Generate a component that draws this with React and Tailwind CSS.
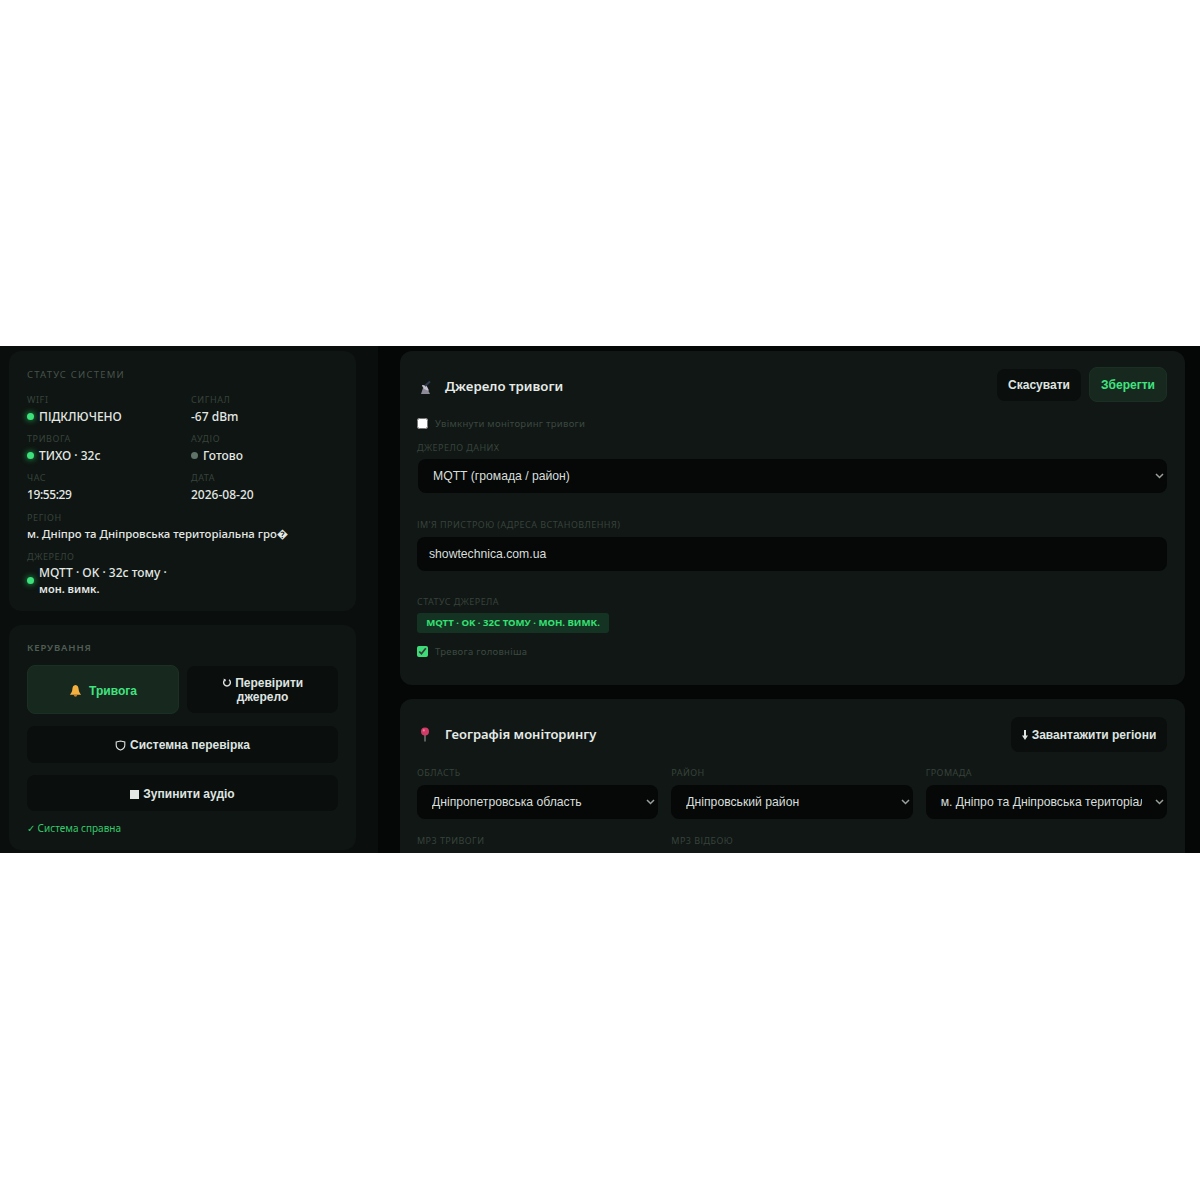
const sans = "font-['Noto_Sans',sans-serif]";
const arial = "font-['Liberation_Sans',Arial,sans-serif]";

// ── Small pieces ──────────────────────────────────────────────
function Dot({ muted }) {
  return (
    <span
      className={`w-[7px] h-[7px] mb-[2px] rounded-full shrink-0 ${
        muted ? "bg-[#5f7368]" : "bg-[#3de07a] shadow-[0_0_6px_#22c55e]"
      }`}
    />
  );
}

function StatLabel({ children }) {
  return <div className="h-[12px] text-[9px] leading-[12px] tracking-[0.6px] text-[#36433c] uppercase">{children}</div>;
}

function Stat({ label, dot, muted, className = "text-[12px] h-[20px]", children }) {
  return (
    <div className="h-[39px]">
      <StatLabel>{label}</StatLabel>
      <div className={`mt-[1px] flex items-center gap-[5px] font-medium text-[#e3e8e5] ${className}`}>
        {dot && <Dot muted={muted} />}
        <span>{children}</span>
      </div>
    </div>
  );
}

function FieldLabel({ children }) {
  return <div className="h-[14px] text-[9px] leading-[14px] tracking-[0.45px] text-[#36433c] uppercase">{children}</div>;
}

function Select({ value, className = "" }) {
  return (
    <div className={`relative h-[34px] ${className}`}>
      <select
        defaultValue={value}
        className={`${arial} appearance-none w-full h-full pl-[15px] pr-[25px] rounded-lg bg-[#050807] text-[12.2px] text-[#d8dedb] outline-none`}
      >
        <option>{value}</option>
      </select>
      <svg
        className="absolute right-[3px] top-[14px] pointer-events-none"
        width="9"
        height="6"
        viewBox="0 0 9 6"
        fill="none"
        stroke="#9aa19d"
        strokeWidth="1.5"
      >
        <path d="M1 1l3.5 3.5L8 1" />
      </svg>
    </div>
  );
}

function ActionBtn({ accent, className = "", children }) {
  return (
    <button
      type="button"
      className={`${arial} flex items-center justify-center gap-[4px] rounded-lg text-[12px] leading-[14px] font-bold ${
        accent ? "bg-[#17291f] border border-[#1b3024] text-[#40e47f]" : "bg-[#0a0e0c] text-[#dfe4e1]"
      } ${className}`}
    >
      {children}
    </button>
  );
}

// ── Emoji drawn as svg ────────────────────────────────────────
function BellIcon() {
  return (
    <svg width="13" height="14" viewBox="0 0 14 14">
      <path d="M7 .6C4.6.6 3.8 3 3.6 5.2 3.4 7.8 2.4 9.6 1 11h12C11.6 9.6 10.6 7.8 10.4 5.2 10.2 3 9.4.6 7 .6z" fill="#f4b13f" />
      <path d="M5.2 11.4a1.8 1.8 0 0 0 3.6 0z" fill="#c9792a" />
    </svg>
  );
}

function RefreshIcon() {
  return (
    <svg className="inline align-[-1px]" width="10" height="10" viewBox="0 0 10 10" fill="none" stroke="#dfe4e1" strokeWidth="1.4">
      <path d="M3 1.8A3.4 3.4 0 1 0 7 1.8" />
      <path d="M1.6 1.2 3.4 1.7 3 3.4" strokeWidth="1" />
    </svg>
  );
}

function ShieldIcon() {
  return (
    <svg width="11" height="11" viewBox="0 0 11 11" fill="none" stroke="#dfe4e1" strokeWidth="1.1">
      <path d="M1.2 2 5.5 1l4.3 1v3.2c0 2.4-1.7 3.9-4.3 4.9-2.6-1-4.3-2.5-4.3-4.9z" />
    </svg>
  );
}

function ArrowDownIcon() {
  return (
    <svg width="6" height="10" viewBox="0 0 6 10" fill="#dfe4e1">
      <path d="M2 0h2v5.5h2L3 10 0 5.5h2z" />
    </svg>
  );
}

function SatelliteIcon() {
  return (
    <svg width="12" height="14" viewBox="0 0 12 14">
      <path d="M1 14 3 8h4l3 6z" fill="#8d8b97" />
      <path d="M2 5C2.6 8.2 5.4 10.4 9 10.6L6.5 5.5z" fill="#c6c3d0" />
      <path d="M5 6 10 1.5" stroke="#2f3b4e" strokeWidth="2" />
    </svg>
  );
}

function PinIcon() {
  return (
    <svg width="10" height="15" viewBox="0 0 10 15">
      <path d="M5 8v6.5" stroke="#8c8f8d" strokeWidth="1.2" />
      <circle cx="5" cy="4.6" r="4" fill="#d13a66" />
      <circle cx="3.8" cy="3.4" r="1.1" fill="#ef7f9f" />
    </svg>
  );
}

// ── Sidebar ───────────────────────────────────────────────────
function StatusCard() {
  return (
    <section className="h-[260px] rounded-xl bg-[#0f1512] pl-[18px] pr-[18px] pt-[18px]">
      <div className="h-[12px] text-[9.5px] leading-[12px] tracking-[1.2px] text-[#46534c] uppercase">Статус системи</div>
      <div className="mt-[13px] grid grid-cols-[164px_1fr]">
        <Stat label="WiFi" dot>ПІДКЛЮЧЕНО</Stat>
        <Stat label="Сигнал">-67 dBm</Stat>
        <Stat label="Тривога" dot>ТИХО · 32с</Stat>
        <Stat label="Аудіо" dot muted>Готово</Stat>
        <Stat label="Час" className="text-[12px] h-[20px] tracking-[-0.4px]">19:55:29</Stat>
        <Stat label="Дата">2026-08-20</Stat>
      </div>
      <div className="mt-[1px]">
        <Stat label="Регіон" className="text-[11.4px] h-[18px]">м. Дніпро та Дніпровська територіальна гро�</Stat>
      </div>
      <StatLabel>Джерело</StatLabel>
      <div className="mt-[2px] flex items-center gap-[5px] text-[12px] leading-[16px] font-medium text-[#e3e8e5]">
        <Dot />
        <div className="w-[140px]">
          MQTT · OK · 32с тому ·
          <br />
          <span className="text-[11px] font-semibold">мон. вимк.</span>
        </div>
      </div>
    </section>
  );
}

function ControlCard() {
  return (
    <section className="mt-[14px] h-[225px] rounded-xl bg-[#0f1512] pl-[18px] pr-[18px] pt-[17px]">
      <div className="h-[12px] text-[9.5px] leading-[12px] font-semibold tracking-[0.9px] text-[#4f5e55] uppercase">Керування</div>
      <div className="mt-[11px] flex flex-col gap-[12px]">
        <div className="flex items-center gap-[8px]">
          <ActionBtn accent className="w-[152px] h-[49px] pt-[2px]">
            <BellIcon />
            <span className="ml-[3px]">Тривога</span>
          </ActionBtn>
          <ActionBtn className="w-[151px] h-[47px]">
            <span className="text-center">
              <RefreshIcon /> Перевірити
              <br />
              джерело
            </span>
          </ActionBtn>
        </div>
        <ActionBtn className="h-[37px] pt-[1px]"><ShieldIcon /> Системна перевірка</ActionBtn>
        <ActionBtn className="h-[36px] pt-[2px]">
          <span className="w-[9px] h-[9px] bg-[#e3e8e5]" />
          Зупинити аудіо
        </ActionBtn>
      </div>
      <div className="mt-[10px] text-[10px] leading-[14px] text-[#34c96c]">✓ Система справна</div>
    </section>
  );
}

// ── Main panels ───────────────────────────────────────────────
function PanelTitle({ icon, className = "", children }) {
  return (
    <div className={`flex items-center font-semibold text-[#e6ebe8] ${className}`}>
      <span className="w-[28px] pl-[3px] flex items-center">{icon}</span>
      {children}
    </div>
  );
}

function SourcePanel() {
  return (
    <section className="h-[334px] rounded-xl bg-[#111714] pl-[17px] pr-[18px] pt-[16px]">
      <div className="h-[35px] flex items-center justify-between">
        <PanelTitle icon={<SatelliteIcon />} className="text-[13.3px] mt-[4px]">Джерело тривоги</PanelTitle>
        <div className="flex items-center gap-[8px]">
          <ActionBtn className="w-[84px] h-[32px]">Скасувати</ActionBtn>
          <ActionBtn accent className="w-[78px] h-[35px]">Зберегти</ActionBtn>
        </div>
      </div>
      <label className="mt-[15px] h-[14px] flex items-center gap-[7px] text-[9.5px] tracking-[0.3px] text-[#3b4941]">
        <input type="checkbox" className="w-[11px] h-[11px] m-0 -translate-y-[1px]" />
        Увімкнути моніторинг тривоги
      </label>
      <div className="mt-[10px]"><FieldLabel>Джерело даних</FieldLabel></div>
      <Select value="MQTT (громада / район)" className="mt-[4px] ml-[1px]" />
      <div className="mt-[25px]"><FieldLabel>Ім'я пристрою (адреса встановлення)</FieldLabel></div>
      <input
        readOnly
        value="showtechnica.com.ua"
        className={`${arial} mt-[5px] w-full h-[34px] px-[12px] rounded-lg bg-[#050807] text-[12.2px] text-[#d8dedb] outline-none`}
      />
      <div className="mt-[24px]"><FieldLabel>Статус джерела</FieldLabel></div>
      <div className="mt-[4px] w-[192px] h-[20px] flex items-center justify-center rounded-[3px] bg-[#153322] text-[9.6px] font-bold text-[#35e074] uppercase">
        MQTT · OK · 32с тому · мон. вимк.
      </div>
      <label className="mt-[12px] h-[14px] flex items-center gap-[7px] text-[9.5px] tracking-[0.3px] text-[#3b4941]">
        <input type="checkbox" defaultChecked className="w-[11px] h-[11px] m-0 -translate-y-[1px] accent-[#3ddc78]" />
        Тревога головніша
      </label>
    </section>
  );
}

function GeoPanel() {
  return (
    <section className="mt-[14px] h-[200px] rounded-xl bg-[#111714] pl-[17px] pr-[18px] pt-[18px]">
      <div className="h-[35px] flex items-center justify-between">
        <PanelTitle icon={<PinIcon />} className="text-[13px]">Географія моніторингу</PanelTitle>
        <ActionBtn className="w-[156px] h-[35px]"><ArrowDownIcon /> Завантажити регіони</ActionBtn>
      </div>
      <div className="mt-[14px] grid grid-cols-3 gap-x-[13px]">
        <div>
          <FieldLabel>Область</FieldLabel>
          <Select value="Дніпропетровська область" className="mt-[5px]" />
        </div>
        <div>
          <FieldLabel>Район</FieldLabel>
          <Select value="Дніпровський район" className="mt-[5px]" />
        </div>
        <div>
          <FieldLabel>Громада</FieldLabel>
          <Select value="м. Дніпро та Дніпровська територіальна громада" className="mt-[5px]" />
        </div>
        <div className="mt-[15px]"><FieldLabel>MP3 тривоги</FieldLabel></div>
        <div className="mt-[15px]"><FieldLabel>MP3 відбою</FieldLabel></div>
      </div>
    </section>
  );
}

export default function App() {
  return (
    <div className={`${sans} min-h-[1200px] bg-white pt-[346px]`}>
      <div className="h-[507px] overflow-hidden flex bg-[#050706]">
        <aside className="w-[378px] shrink-0 bg-[#0a0f0d] pl-[9px] pr-[22px] pt-[5px]">
          <StatusCard />
          <ControlCard />
        </aside>
        <main className="flex-1 pl-[22px] pr-[15px] pt-[5px]">
          <SourcePanel />
          <GeoPanel />
        </main>
      </div>
    </div>
  );
}
